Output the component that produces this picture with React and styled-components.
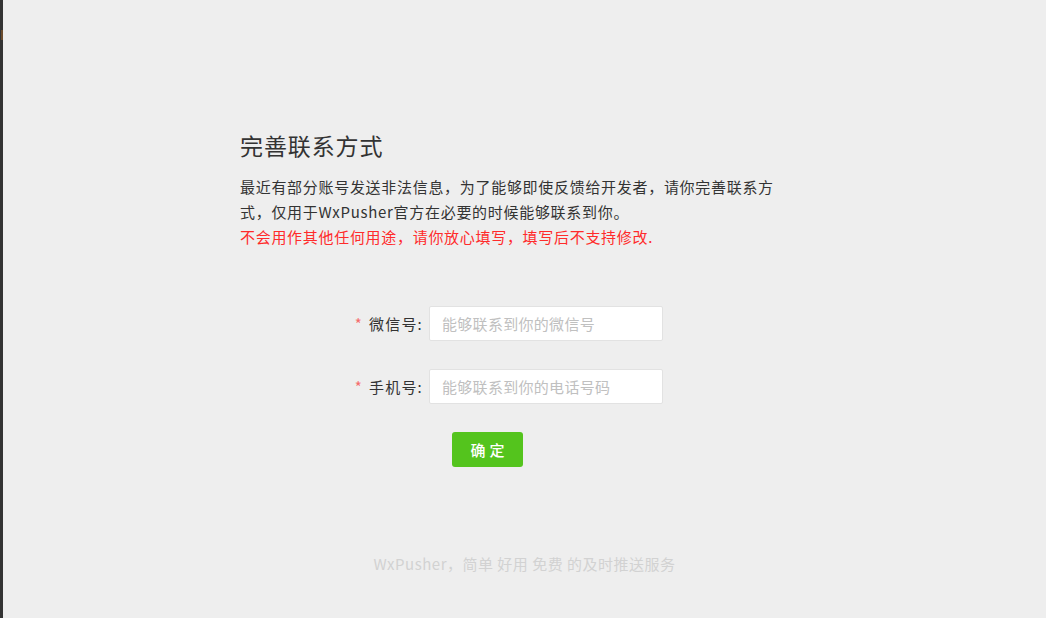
import React from "react";
import styled, { createGlobalStyle } from "styled-components";

const Global = createGlobalStyle`
  html, body { margin: 0; padding: 0; }
  body {
    background: #eeeeee;
    font-family: "Noto Sans CJK SC", "Noto Sans", sans-serif;
    color: #333;
  }
  * { box-sizing: border-box; }
`;

const Page = styled.div`
  display: flex;
  align-items: stretch;
  min-height: 618px;
`;

const Strip = styled.div`
  width: 3px;
  background: #333333;
  flex: none;
  padding-top: 30px;
`;

const StripMark = styled.div`
  width: 2px;
  height: 10px;
  margin-left: 1px;
  background: #6a4b2c;
`;

const Main = styled.main`
  flex: 1;
  padding-top: 130px;
`;

const Container = styled.div`
  width: 569px;
  margin: 0 auto;
`;

const Title = styled.h1`
  margin: 0 0 14px;
  font-size: 23px;
  line-height: 30px;
  font-weight: 400;
  letter-spacing: 0.9px;
  color: #333;
`;

const Intro = styled.p`
  margin: 0;
  width: 548px;
  font-size: 15px;
  line-height: 25px;
  letter-spacing: 0.7px;
  color: ${(p) => (p.$warn ? "#ff2b2b" : "#333")};
`;

const Form = styled.form`
  margin: 57px 0 0 100px;
  display: flex;
  flex-direction: column;
  gap: 28px;
`;

const Row = styled.div`
  display: flex;
  align-items: center;
`;

const Label = styled.label`
  width: 89px;
  padding-right: 6px;
  text-align: right;
  font-size: 15px;
  letter-spacing: 1.2px;
  color: #333;
  white-space: nowrap;
`;

const Star = styled.span`
  color: #f56c6c;
  margin-right: 6px;
`;

const Input = styled.input`
  width: 234px;
  height: 35px;
  padding: 0 12px;
  border: 1px solid #e2e2e2;
  border-radius: 2px;
  background: #fff;
  font-family: inherit;
  font-size: 15px;
  letter-spacing: 0.3px;
  outline: none;
  &::placeholder { color: #c0c0c0; }
`;

const ButtonRow = styled.div`
  padding-left: 112px;
`;

const Submit = styled.button`
  width: 71px;
  height: 35px;
  border: none;
  border-radius: 3px;
  background: #54c41d;
  color: #fff;
  font-family: inherit;
  font-size: 15px;
  font-weight: 500;
  letter-spacing: 4px;
  padding: 0 0 0 4px;
  cursor: pointer;
`;

const Footer = styled.footer`
  margin-top: 87px;
  text-align: center;
  font-size: 15px;
  line-height: 20px;
  letter-spacing: 0.5px;
  color: #d2d2d2;
`;

export default function App() {
  return (
    <>
      <Global />
      <Page>
        <Strip>
          <StripMark />
        </Strip>
        <Main>
          <Container>
            <Title>完善联系方式</Title>
            <Intro>
              最近有部分账号发送非法信息，为了能够即使反馈给开发者，请你完善联系方式，仅用于WxPusher官方在必要的时候能够联系到你。
            </Intro>
            <Intro $warn>不会用作其他任何用途，请你放心填写，填写后不支持修改.</Intro>
            <Form onSubmit={(e) => e.preventDefault()}>
              <Row>
                <Label>
                  <Star>*</Star>微信号:
                </Label>
                <Input placeholder="能够联系到你的微信号" />
              </Row>
              <Row>
                <Label>
                  <Star>*</Star>手机号:
                </Label>
                <Input placeholder="能够联系到你的电话号码" />
              </Row>
              <ButtonRow>
                <Submit type="submit">确定</Submit>
              </ButtonRow>
            </Form>
            <Footer>WxPusher，简单 好用 免费 的及时推送服务</Footer>
          </Container>
        </Main>
      </Page>
    </>
  );
}
